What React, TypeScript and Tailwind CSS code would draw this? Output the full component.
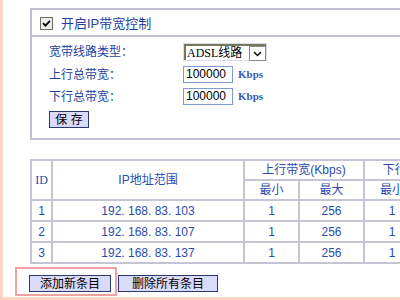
import React from "react";

const lbl = "text-[#1f3f9f] text-[12px] leading-none";
const cellB = "border-2 border-[#c4c4d4]";

function Btn({ children, w }: { children: React.ReactNode; w: string }) {
  return (
    <div
      className={`${w} h-[17px] flex items-center justify-center bg-[#dadafa] border border-[#2d3770] text-[12px] leading-none text-black`}
    >
      {children}
    </div>
  );
}

export default function App() {
  const rows = [
    ["1", "192. 168. 83. 103"],
    ["2", "192. 168. 83. 107"],
    ["3", "192. 168. 83. 137"],
  ];
  return (
    <div
      className="w-[400px] h-[300px] overflow-hidden bg-white relative"
      style={{ fontFamily: '"Liberation Sans","Noto Sans CJK SC",sans-serif' }}
    >
      <div className="h-[300px] box-border border-l-[3px] border-b-[3px] border-[#fcd6c2] pl-[27px] pt-[8px]">
        {/* top box */}
        <div className="w-[420px] border-2 border-r-0 border-[#c0c0d2]">
          <div className="h-[27px] flex items-center pl-[8px] pt-[2px] border-b-2 border-[#c0c0d2]">
            <div className="w-[13px] h-[13px] border border-[#6f6f62] bg-[#ececec] flex items-center justify-center">
              <svg width="9" height="9" viewBox="0 0 9 9">
                <path d="M1 4.2 L3.4 6.6 L8 1.8" stroke="#000" strokeWidth="1.8" fill="none" />
              </svg>
            </div>
            <span className="ml-[8px] text-[13px] leading-none text-[#1f3f9f]">开启IP带宽控制</span>
          </div>
          <div className="h-[101px] pl-[17px] pt-[6px] flex flex-col">
            <div className="flex items-center h-[18px]">
              <div className={`w-[134px] ${lbl}`}>宽带线路类型：</div>
              <div className="w-[84px] h-[18px] border border-[#dcdcf0] flex">
                <div className="flex-1 flex border-t-2 border-l-2 border-[#777760] bg-white">
                  <span
                    className="flex-1 text-[12px] leading-[14px] pl-[1px] text-black"
                    style={{ fontFamily: '"Liberation Serif","Noto Sans CJK SC",serif' }}
                  >
                    ADSL线路
                  </span>
                  <div className="w-[17px] h-[15px] border border-[#8a8a8a] bg-white flex items-center justify-center">
                    <svg width="9" height="6" viewBox="0 0 9 6">
                      <path d="M1 1 L4.5 4.5 L8 1" stroke="#000" strokeWidth="1.5" fill="none" />
                    </svg>
                  </div>
                </div>
              </div>
            </div>
            <div className="flex items-center h-[17px] mt-[5px]">
              <div className={`w-[134px] ${lbl}`}>上行总带宽：</div>
              <div className="w-[50px] h-[17px] border border-[#7f9ad8] text-[12px] leading-[15px] pl-[2px] text-black">100000</div>
              <span
                className="ml-[5px] text-[11px] font-bold text-[#3a5ab8]"
                style={{ fontFamily: '"Liberation Serif",serif' }}
              >
                Kbps
              </span>
            </div>
            <div className="flex items-center h-[17px] mt-[5px]">
              <div className={`w-[134px] ${lbl}`}>下行总带宽：</div>
              <div className="w-[50px] h-[17px] border border-[#7f9ad8] text-[12px] leading-[15px] pl-[2px] text-black">100000</div>
              <span
                className="ml-[5px] text-[11px] font-bold text-[#3a5ab8]"
                style={{ fontFamily: '"Liberation Serif",serif' }}
              >
                Kbps
              </span>
            </div>
            <div className="mt-[6px]">
              <Btn w="w-[40px]">保 存</Btn>
            </div>
          </div>
        </div>

        {/* table */}
        <table className="mt-[19px] table-fixed border-collapse w-[454px] text-[12px] text-[#2a4cb0]">
          <colgroup>
            <col className="w-[21px]" />
            <col className="w-[192px]" />
            <col className="w-[55px]" />
            <col className="w-[65px]" />
            <col className="w-[56px]" />
            <col className="w-[65px]" />
          </colgroup>
          <tbody>
            <tr className="h-[20px]">
              <td rowSpan={2} className={`${cellB} text-center`} style={{ fontFamily: '"Liberation Serif",serif' }}>ID</td>
              <td rowSpan={2} className={`${cellB} text-center`}>IP地址范围</td>
              <td colSpan={2} className={`${cellB} text-center`}>上行带宽(Kbps)</td>
              <td colSpan={2} className={`${cellB} text-center`}>下行带宽(Kbps)</td>
            </tr>
            <tr className="h-[18px]">
              <td className={`${cellB} text-center`}>最小</td>
              <td className={`${cellB} text-center`}>最大</td>
              <td className={`${cellB} text-center`}>最小</td>
              <td className={`${cellB} text-center`}>最大</td>
            </tr>
            {rows.map(([id, ip]) => (
              <tr key={id} className="h-[21px]">
                <td className={`${cellB} text-center`}>{id}</td>
                <td className={`${cellB} text-center`}>{ip}</td>
                <td className={`${cellB} text-center`}>1</td>
                <td className={`${cellB} text-center`}>256</td>
                <td className={`${cellB} text-center`}>1</td>
                <td className={`${cellB} text-center`}>256</td>
              </tr>
            ))}
          </tbody>
        </table>

        {/* bottom buttons */}
        <div className="mt-[11px] -ml-[1px] flex gap-[7px]">
          <Btn w="w-[82px]">添加新条目</Btn>
          <Btn w="w-[100px]">删除所有条目</Btn>
        </div>
      </div>
      <div className="absolute left-[15px] top-[267px] w-[102px] h-[29px] border-2 border-[#f2a0a0]" />
    </div>
  );
}
